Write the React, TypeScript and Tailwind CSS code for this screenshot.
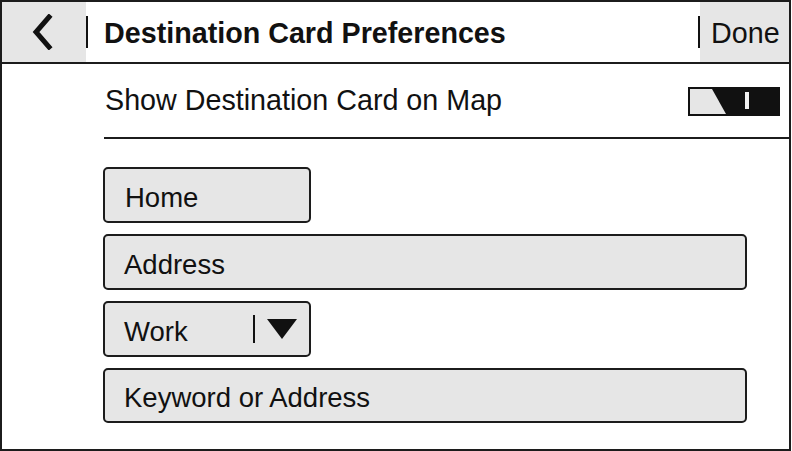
import React from "react";

const font = { fontFamily: '"Liberation Sans", Arial, sans-serif' };

export default function App() {
  return (
    <div className="w-[792px] h-[451px] bg-white" style={font}>
      <div className="w-[791px] h-[451px] border-2 border-[#1c1c1c] flex flex-col text-[#111]">
        {/* Header */}
        <div className="h-[62px] border-b-2 border-[#1c1c1c] flex items-stretch shrink-0">
          <div className="w-[84px] bg-[#e6e6e6] flex items-center justify-center">
            <svg width="24" height="36" viewBox="0 0 24 36" className="-ml-[4px]">
              <path d="M19 3 L6 18 L19 33" fill="none" stroke="#111" strokeWidth="5" strokeLinecap="square" />
            </svg>
          </div>
          <div className="w-[2px] h-[32px] bg-[#111] self-center" />
          <div className="flex-1 flex items-center pl-[16px] pt-[3px] text-[28.7px] font-bold">
            Destination Card Preferences
          </div>
          <div className="w-[2px] h-[32px] bg-[#111] self-center" />
          <div className="w-[89px] bg-[#e6e6e6] flex items-center pl-[11px] pt-[3px] text-[28.7px]">
            Done
          </div>
        </div>
        {/* Body */}
        <div className="flex-1 flex flex-col">
          <div className="ml-[102px] h-[75px] border-b-2 border-[#1c1c1c] flex items-center justify-between pr-[9px] shrink-0">
            <span className="text-[28.7px] pl-[1px]">Show Destination Card on Map</span>
            <div className="w-[92px] h-[29px] bg-[#111] relative mt-[2px]">
              <svg width="92" height="29" viewBox="0 0 92 29" className="absolute inset-0">
                <polygon points="2,2 24,2 38,27 2,27" fill="#e6e6e6" />
                <rect x="57" y="5" width="4" height="17" fill="#f2f2f2" />
              </svg>
            </div>
          </div>
          <div className="ml-[101px] mt-[28px] flex flex-col gap-[11px]">
            <div className="w-[208px] h-[56px] border-2 border-[#1c1c1c] rounded-[5px] bg-[#e6e6e6] flex items-center pl-[20px] pt-[5px] text-[27.5px]">
              Home
            </div>
            <div className="w-[644px] h-[56px] border-2 border-[#1c1c1c] rounded-[5px] bg-[#e6e6e6] flex items-center pl-[19px] pt-[5px] text-[27.5px]">
              Address
            </div>
            <div className="w-[208px] h-[56px] border-2 border-[#1c1c1c] rounded-[5px] bg-[#e6e6e6] flex items-center pl-[19px] text-[27.5px]">
              <span className="flex-1 pt-[5px]">Work</span>
              <div className="w-[2px] h-[28px] bg-[#111]" />
              <svg width="30" height="20" viewBox="0 0 30 20" className="ml-[12px] mr-[12px]">
                <polygon points="0,0 30,0 15,20" fill="#111" />
              </svg>
            </div>
            <div className="w-[644px] h-[55px] border-2 border-[#1c1c1c] rounded-[5px] bg-[#e6e6e6] flex items-center pl-[19px] pt-[5px] text-[27.5px]">
              Keyword or Address
            </div>
          </div>
        </div>
      </div>
    </div>
  );
}
